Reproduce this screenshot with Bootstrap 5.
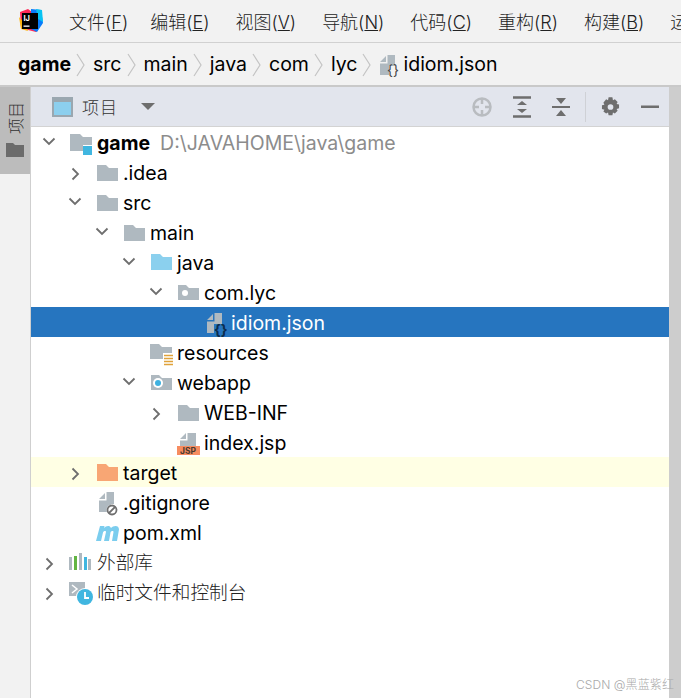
<!doctype html>
<html lang="zh"><head><meta charset="utf-8"><title>IDE</title>
<link href="https://cdn.jsdelivr.net/npm/bootstrap@5.3.0/dist/css/bootstrap.min.css" rel="stylesheet">
<style>
html,body{height:698px;overflow:hidden}
body{width:681px;background:#f2f2f2;font-family:Inter,"Noto Sans CJK SC",sans-serif;color:#000;position:relative}
.menubar{height:43px;border-bottom:1px solid #d1d1d1;white-space:nowrap;overflow:hidden;padding-left:17px;padding-top:3px}
.appicon{width:26px;height:26px;margin-right:26px;flex:none;margin-top:-4px}
.menuitem{font:300 18px/1 Inter,"Noto Sans CJK SC",sans-serif;color:#222;flex:none;margin-right:26px}
.menuitem.firstitem{margin-right:22px}
.crumbs{height:42px;padding-left:18px;padding-top:1px;font-size:19.500px;white-space:nowrap}
.crumbs svg.sep{width:10px;height:24px;margin:0 7px 0 5px}
.crumbname{font-weight:700}
.workspace{height:613px;border-top:2px solid #c9c9c9}
.sidestrip{width:31px;flex:none;border-right:1px solid #cfcfcf;background:#f2f2f2}
.sidetab{height:87px;background:#bcbcbc;padding-top:15px}
.sidelabel{writing-mode:vertical-rl;text-orientation:sideways;transform:rotate(180deg);font:300 16px/1 "Noto Sans CJK SC",sans-serif;color:#333;height:32px;margin-bottom:9px}
.rightstrip{width:12px;flex:none;background:#cdcdcd}
.panel{flex:1;min-width:0;background:#fff}
.toolhead{height:40px;background:#e2e5ed;border-bottom:1px solid #d3d3d3;padding-left:21px;padding-right:10px}
.toolname{font:300 17px/1 "Noto Sans CJK SC",sans-serif;color:#333;margin-left:9px;letter-spacing:1px}
.caret{width:0;height:0;border-left:7px solid transparent;border-right:7px solid transparent;border-top:7px solid #6e6e6e;margin-left:23px}
.tb{flex:none}
.tbsep{width:1px;height:30px;background:#cfd1d6;margin:0 15px}
.ms-spaced{margin-left:21px}
.row-item{height:30px;display:flex;align-items:center;font-size:19.500px;line-height:26px;padding-top:2px;white-space:nowrap;color:#000}
.lv0{padding-left:5px}.lv1{padding-left:31px}.lv2{padding-left:58px}.lv3{padding-left:85px}.lv4{padding-left:112px}.lv5{padding-left:139px}
.chev{width:27px;height:16px;flex:none;margin-top:2px}
.nochev{width:27px;flex:none}
.ico{width:22px;height:26px;flex:none;margin-left:8px;margin-right:4px;margin-top:2px;display:block;overflow:visible}
.picked{background:#2675bf;color:#fff}
.excluded{background:#ffffe4}
.pathnote{color:#8c8c8c;margin-left:10px}
.cjk{font:300 18.700px/26px Inter,"Noto Sans CJK SC",sans-serif;color:#222}
.wm{position:absolute;right:7px;bottom:7px;font:300 12px/1 Inter,"Noto Sans CJK SC",sans-serif;color:#a9a9a9;letter-spacing:.1px}
</style></head>
<body>
<svg width="0" height="0" class="position-absolute">
<defs>
<symbol id="fold" viewBox="0 0 22 26"><path d="M0 4h9l3 3h9v13H0z" fill="#afb9c0"/></symbol>
<symbol id="chd" viewBox="0 0 27 16"><path d="M7.500 2.500l5.500 5.500 5.500-5.500" fill="none" stroke="#6e6e6e" stroke-width="1.800"/></symbol>
<symbol id="chr" viewBox="0 0 27 16"><path d="M10.500 2.500l5.500 5.500-5.500 5.500" fill="none" stroke="#6e6e6e" stroke-width="1.800"/></symbol>
<symbol id="sep" viewBox="0 0 10 24"><path d="M1 1l7 11-7 11" fill="none" stroke="#c4c4c4" stroke-width="1.200"/></symbol>
</defs>
</svg>

<div class="menubar d-flex align-items-center">
<svg class="appicon" viewBox="0 0 26 26"><path d="M3 4l8-3 4 3 8-2 2 13-6 9-8-2-7-2z" fill="#fe2857"/><path d="M14 1l10 1 2 13-6 9-6-3z" fill="#087cfa"/><path d="M19 1l6 1 1 12-5-3z" fill="#07c3f2"/><path d="M2 9l2 12 7 2-3-7z" fill="#fdb60d"/><rect x="5" y="5" width="16" height="16" fill="#000"/><text x="6.500" y="13" font-size="7.500" font-weight="700" fill="#fff" font-family="Inter">IJ</text><rect x="6.500" y="17.500" width="6" height="1.300" fill="#fff"/></svg>
<span class="menuitem firstitem">文件(<u>F</u>)</span>
<span class="menuitem">编辑(<u>E</u>)</span>
<span class="menuitem">视图(<u>V</u>)</span>
<span class="menuitem">导航(<u>N</u>)</span>
<span class="menuitem">代码(<u>C</u>)</span>
<span class="menuitem">重构(<u>R</u>)</span>
<span class="menuitem">构建(<u>B</u>)</span>
<span class="menuitem">运</span>
</div>

<div class="crumbs d-flex align-items-center">
<span class="crumbname">game</span><svg class="sep"><use href="#sep"/></svg>
<span>src</span><svg class="sep"><use href="#sep"/></svg>
<span>main</span><svg class="sep"><use href="#sep"/></svg>
<span>java</span><svg class="sep"><use href="#sep"/></svg>
<span>com</span><svg class="sep"><use href="#sep"/></svg>
<span>lyc</span><svg class="sep"><use href="#sep"/></svg>
<svg width="24" height="24" viewBox="0 0 24 24"><path d="M1 9l6-6v6zM8.500 2H16v11h-6v9H1V10.500h7.500z" fill="#afb9c0"/><text x="8" y="22" font-size="14" font-family="Inter" font-weight="400" fill="#444">{}</text></svg>
<span>idiom.json</span>
</div>

<div class="workspace d-flex">
<div class="sidestrip">
<div class="sidetab d-flex flex-column align-items-center">
<div class="sidelabel">项目</div>
<svg width="18" height="14" viewBox="0 0 18 14"><path d="M0 0h7l2 2h9v12H0z" fill="#6b6b6b"/></svg>
</div>
</div>
<div class="panel">
<div class="toolhead d-flex align-items-center">
<svg width="21" height="20" viewBox="0 0 21 20"><rect width="21" height="20" fill="#9aa7b0"/><rect x="2" y="5" width="17" height="13" fill="#8ccfee"/></svg>
<span class="toolname">项目</span><span class="caret"></span>
<div class="flex-grow-1"></div>
<svg class="tb" width="20" height="22" viewBox="0 0 20 22"><circle cx="10" cy="11" r="8.500" fill="none" stroke="#b9bcc0" stroke-width="2.500"/><path d="M10 2v6M10 14v6M1 11h6M13 11h6" stroke="#b9bcc0" stroke-width="2.500"/></svg>
<svg class="tb ms-spaced" width="18" height="22" viewBox="0 0 18 22"><path d="M0 1.500h18M0 20.500h18" stroke="#6e6e6e" stroke-width="2.500"/><path d="M4 9l5-4 5 4zM4 13l5 4 5-4z" fill="#6e6e6e"/></svg>
<svg class="tb ms-spaced" width="18" height="22" viewBox="0 0 18 22"><path d="M0 11h18" stroke="#6e6e6e" stroke-width="2"/><path d="M4 2l5 6 5-6zM4 20l5-6 5 6z" fill="#6e6e6e"/></svg>
<span class="tbsep"></span>
<svg class="tb" width="19" height="20" viewBox="0 0 20 20"><path d="M8 0h4l.6 3 2-.9 2.900 2.900-1.100 2 2.600.6v4l-2.600.6 1.100 2-2.900 2.900-2-1.100-.6 3H8l-.6-3-2 1.100L2.500 15l1.100-2L1 12.400v-4l2.600-.6-1.100-2L5.400 2.100l2 .9z" fill="#6e6e6e" transform="translate(0 -.2)"/><circle cx="10" cy="10" r="3" fill="#e2e5ed"/></svg>
<svg class="tb ms-spaced" width="18" height="4" viewBox="0 0 18 4"><rect y="0.500" width="18" height="2.500" fill="#6e6e6e"/></svg>
</div>
<div>
<div class="row-item lv0"><svg class="chev"><use href="#chd"/></svg>
<svg class="ico" viewBox="0 0 22 26"><path d="M-1 3h10l3 3h9v8h-9v6H-1z" fill="#afb9c0"/><rect x="12" y="15" width="9" height="9" fill="#40b6e0"/></svg><b>game</b><span class="pathnote">D:\JAVAHOME\java\game</span></div>
<div class="row-item lv1"><svg class="chev"><use href="#chr"/></svg><svg class="ico" viewBox="0 0 22 26"><use href="#fold" width="22" height="26"/></svg><span>.idea</span></div>
<div class="row-item lv1"><svg class="chev"><use href="#chd"/></svg><svg class="ico" viewBox="0 0 22 26"><use href="#fold" width="22" height="26"/></svg><span>src</span></div>
<div class="row-item lv2"><svg class="chev"><use href="#chd"/></svg><svg class="ico" viewBox="0 0 22 26"><use href="#fold" width="22" height="26"/></svg><span>main</span></div>
<div class="row-item lv3"><svg class="chev"><use href="#chd"/></svg><svg class="ico" viewBox="0 0 22 26"><path d="M0 3h9l3 3h9v13H0z" fill="#8bd0ee"/></svg><span>java</span></div>
<div class="row-item lv4"><svg class="chev"><use href="#chd"/></svg><svg class="ico" viewBox="0 0 22 26"><path d="M0 4h8l3 3h10v12H0z" fill="#afb9c0"/><circle cx="7" cy="12" r="3" fill="#fff"/></svg><span>com.lyc</span></div>
<div class="row-item lv5 picked"><span class="nochev"></span><svg class="ico" viewBox="0 0 22 26"><path d="M2 9l6-6v6zM9.500 2H17v11H9v9H2V10.500h7.500z" fill="#afb9c0"/><text x="9" y="24" font-size="14.500" font-family="Inter" font-weight="700" fill="#0c2d4d">{}</text></svg><span>idiom.json</span></div>
<div class="row-item lv3"><span class="nochev"></span><svg class="ico" viewBox="0 0 22 26"><path d="M-1 3h9l3 3h10v12H-1z" fill="#afb9c0"/><rect x="12" y="12" width="10" height="13" fill="#fff"/><path d="M13 14.500h9M13 17.500h9M13 20.500h9M13 23.500h9" stroke="#e0a23a" stroke-width="1.500"/></svg><span>resources</span></div>
<div class="row-item lv3"><svg class="chev"><use href="#chd"/></svg><svg class="ico" viewBox="0 0 22 26"><path d="M0 4h8l3 3h10v12H0z" fill="#afb9c0"/><circle cx="7" cy="12" r="5" fill="#fff"/><circle cx="7" cy="12" r="3" fill="#3eb1e0"/></svg><span>webapp</span></div>
<div class="row-item lv4"><svg class="chev"><use href="#chr"/></svg><svg class="ico" viewBox="0 0 22 26"><use href="#fold" width="22" height="26"/></svg><span>WEB-INF</span></div>
<div class="row-item lv4"><span class="nochev"></span><svg class="ico" viewBox="0 0 22 26"><path d="M2 8l6-6v6zM9.500 2H18v13H2V9.500h7.500z" fill="#afb9c0"/><rect y="15" x="-1" width="23" height="9" fill="#f78c60"/><text x="2" y="23" font-size="8.500" font-weight="700" font-family="Inter" fill="#4a3a30">JSP</text></svg><span>index.jsp</span></div>
<div class="row-item lv1 excluded"><svg class="chev"><use href="#chr"/></svg><svg class="ico" viewBox="0 0 22 26"><path d="M0 3h9l3 3h9v14H0z" fill="#f8a674"/></svg><span>target</span></div>
<div class="row-item lv1"><span class="nochev"></span><svg class="ico" viewBox="0 0 22 26"><path d="M2 8l6-6v6zM9.500 1H17v12h-3v8H2V9.500h7.500z" fill="#afb9c0"/><circle cx="15" cy="19" r="5.500" fill="#fff"/><circle cx="15" cy="19" r="4.500" fill="#fff" stroke="#6e6e6e" stroke-width="1.800"/><path d="M12 22l6-6" stroke="#6e6e6e" stroke-width="1.800"/></svg><span>.gitignore</span></div>
<div class="row-item lv1"><span class="nochev"></span><svg class="ico" viewBox="0 0 22 26"><path d="M-1 20L3 5h4.500l-.5 2c2-2.500 6-3 7 0 2-2.500 8-3.500 8 1.500L20 20h-5l1.500-9c.2-1.500-2.500-1.500-3 .5L12 20H7l2-9c.2-1.500-2.500-1.500-3 .5L4 20z" fill="#7bcdee"/></svg><span>pom.xml</span></div>
<div class="row-item lv0 cjk"><svg class="chev"><use href="#chr"/></svg><svg class="ico" viewBox="0 0 22 26"><rect x="-2" y="6" width="3" height="13" fill="#afb9c0"/><rect x="3" y="5" width="3" height="14" fill="#62b543"/><rect x="8" y="2" width="3" height="17" fill="#afb9c0"/><rect x="13" y="6" width="3" height="13" fill="#40b6e0"/><rect x="17" y="8" width="3" height="11" fill="#afb9c0"/></svg><span>外部库</span></div>
<div class="row-item lv0 cjk"><svg class="chev"><use href="#chr"/></svg><svg class="ico" viewBox="0 0 22 26"><rect x="-2" y="1" width="16" height="14" fill="#afb9c0"/><path d="M1 4l5 4-5 4" fill="none" stroke="#fff" stroke-width="1.500"/><circle cx="14" cy="16" r="9" fill="#fff"/><circle cx="14" cy="16" r="8" fill="#40b6e0"/><path d="M14 11v6h4" fill="none" stroke="#fff" stroke-width="1.800"/></svg><span>临时文件和控制台</span></div>
</div>
</div>
<div class="rightstrip"></div>
</div>
<div class="wm">CSDN @黑蓝紫红</div>
</body></html>
